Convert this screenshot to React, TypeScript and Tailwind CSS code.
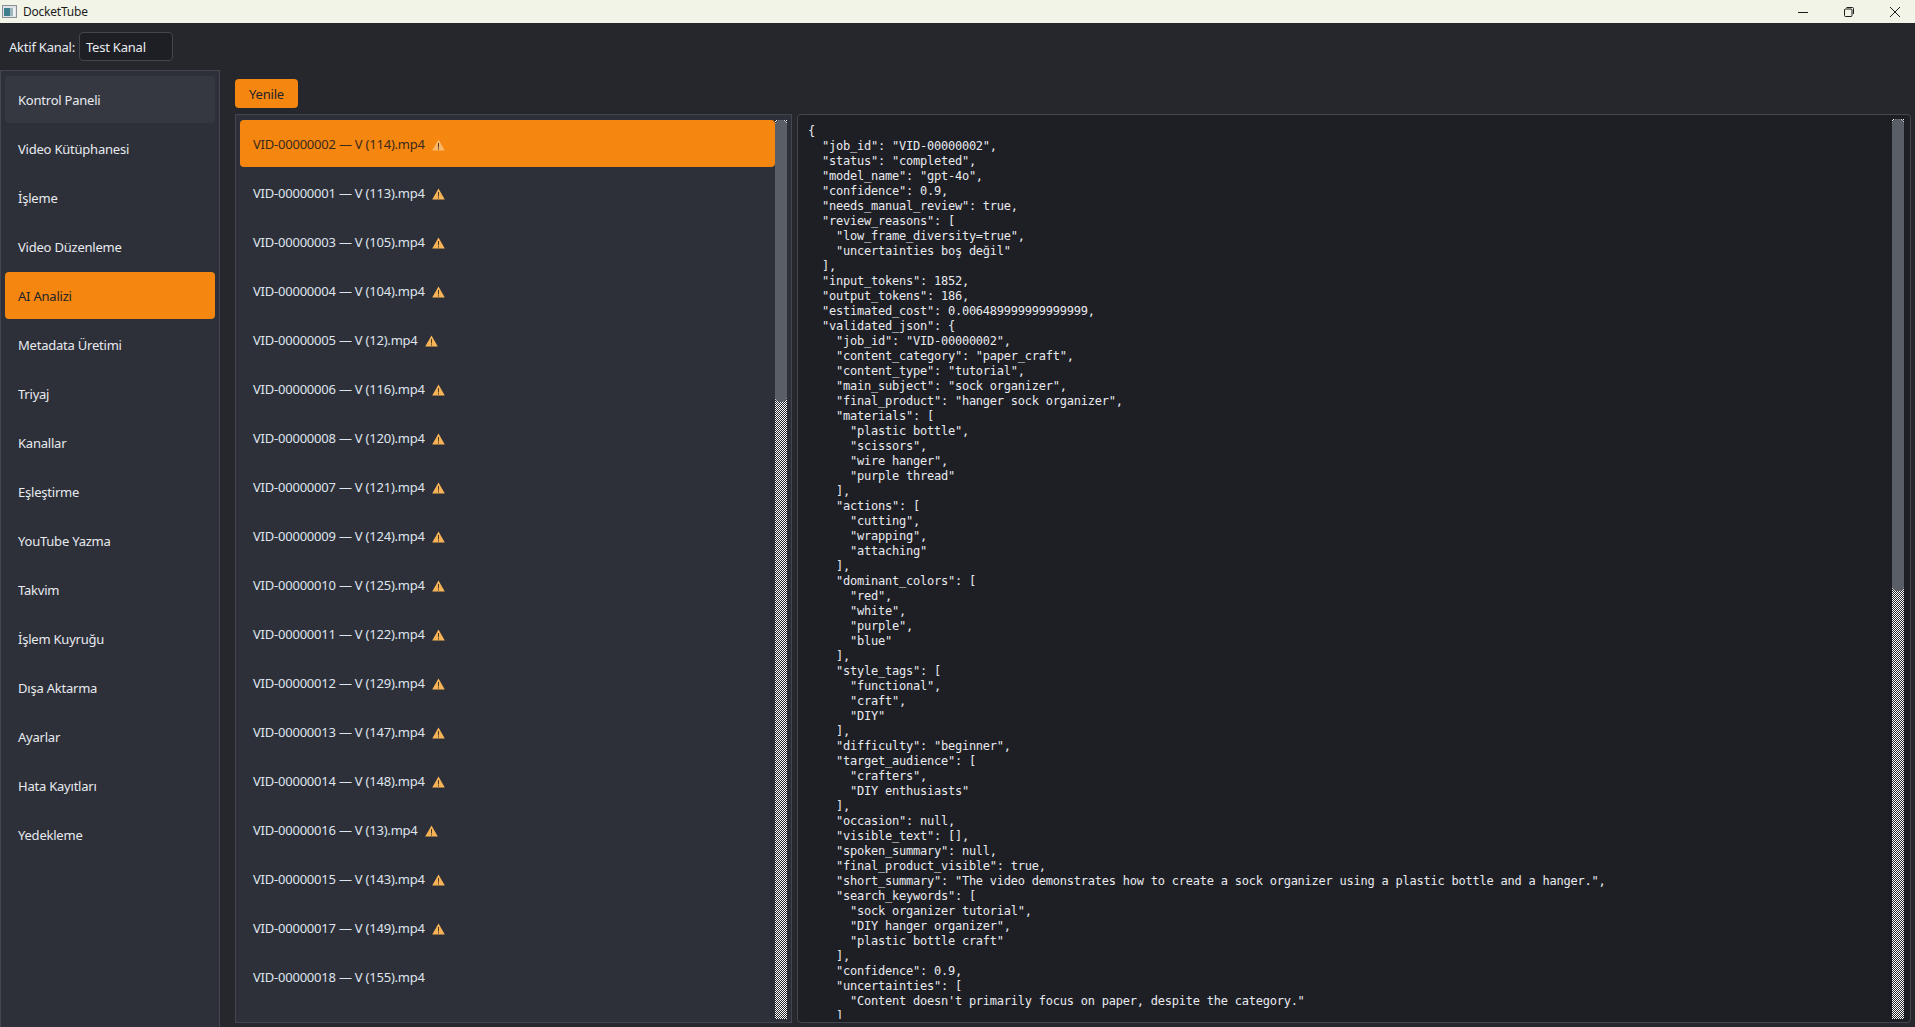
const navItems = [
  "Kontrol Paneli",
  "Video Kütüphanesi",
  "İşleme",
  "Video Düzenleme",
  "AI Analizi",
  "Metadata Üretimi",
  "Triyaj",
  "Kanallar",
  "Eşleştirme",
  "YouTube Yazma",
  "Takvim",
  "İşlem Kuyruğu",
  "Dışa Aktarma",
  "Ayarlar",
  "Hata Kayıtları",
  "Yedekleme",
];

const videos = [
  { label: "VID-00000002 — V (114).mp4", warn: true },
  { label: "VID-00000001 — V (113).mp4", warn: true },
  { label: "VID-00000003 — V (105).mp4", warn: true },
  { label: "VID-00000004 — V (104).mp4", warn: true },
  { label: "VID-00000005 — V (12).mp4", warn: true },
  { label: "VID-00000006 — V (116).mp4", warn: true },
  { label: "VID-00000008 — V (120).mp4", warn: true },
  { label: "VID-00000007 — V (121).mp4", warn: true },
  { label: "VID-00000009 — V (124).mp4", warn: true },
  { label: "VID-00000010 — V (125).mp4", warn: true },
  { label: "VID-00000011 — V (122).mp4", warn: true },
  { label: "VID-00000012 — V (129).mp4", warn: true },
  { label: "VID-00000013 — V (147).mp4", warn: true },
  { label: "VID-00000014 — V (148).mp4", warn: true },
  { label: "VID-00000016 — V (13).mp4", warn: true },
  { label: "VID-00000015 — V (143).mp4", warn: true },
  { label: "VID-00000017 — V (149).mp4", warn: true },
  { label: "VID-00000018 — V (155).mp4", warn: false },
];

const json = `{
  "job_id": "VID-00000002",
  "status": "completed",
  "model_name": "gpt-4o",
  "confidence": 0.9,
  "needs_manual_review": true,
  "review_reasons": [
    "low_frame_diversity=true",
    "uncertainties boş değil"
  ],
  "input_tokens": 1852,
  "output_tokens": 186,
  "estimated_cost": 0.006489999999999999,
  "validated_json": {
    "job_id": "VID-00000002",
    "content_category": "paper_craft",
    "content_type": "tutorial",
    "main_subject": "sock organizer",
    "final_product": "hanger sock organizer",
    "materials": [
      "plastic bottle",
      "scissors",
      "wire hanger",
      "purple thread"
    ],
    "actions": [
      "cutting",
      "wrapping",
      "attaching"
    ],
    "dominant_colors": [
      "red",
      "white",
      "purple",
      "blue"
    ],
    "style_tags": [
      "functional",
      "craft",
      "DIY"
    ],
    "difficulty": "beginner",
    "target_audience": [
      "crafters",
      "DIY enthusiasts"
    ],
    "occasion": null,
    "visible_text": [],
    "spoken_summary": null,
    "final_product_visible": true,
    "short_summary": "The video demonstrates how to create a sock organizer using a plastic bottle and a hanger.",
    "search_keywords": [
      "sock organizer tutorial",
      "DIY hanger organizer",
      "plastic bottle craft"
    ],
    "confidence": 0.9,
    "uncertainties": [
      "Content doesn't primarily focus on paper, despite the category."
    ]`;

const WarnIcon = ({ active }: { active: boolean }) => (
  <svg width="13" height="12" viewBox="0 0 13 12" className="ml-[7px] shrink-0">
    <path d="M6.5 0.5 L12.8 11.5 L0.2 11.5 Z" fill={active ? "#f9b76a" : "#f8b357"} />
    <rect x="6" y="4" width="1" height="4.5" fill="#4a3a22" />
    <rect x="6" y="9.3" width="1" height="1.2" fill="#4a3a22" />
  </svg>
);

const Scrollbar = ({ handle }: { handle: string }) => (
  <div className="w-[12px] shrink-0 bg-[repeating-conic-gradient(#ffffff_0_25%,#23252b_0_50%)] bg-[length:2px_2px]">
    <div className={`${handle} rounded-t-[5px] rounded-b-[5px] bg-[#5a5e67]`} />
  </div>
);

const App = () => {
  return (
    <div className="flex flex-col w-[1915px] h-[1027px] overflow-hidden bg-[#26272d] font-['Noto_Sans',sans-serif] text-[13px] tracking-[-0.22px] text-[#e8eaf0]">
      <div className="flex items-center h-[23px] shrink-0 bg-[#f2f4e8] text-[12px] text-[#1c1c1c]">
        <svg width="15" height="13" viewBox="0 0 15 13" className="ml-[2px]">
          <rect x="0.5" y="0.5" width="14" height="12" fill="#dfe3e6" stroke="#8a9099" />
          <rect x="2" y="3" width="6" height="8" fill="#3d7f8c" />
          <rect x="8" y="3" width="3" height="8" fill="#9fb5be" />
          <rect x="11" y="3" width="2" height="8" fill="#f1f3f4" />
        </svg>
        <span className="ml-[6px]">DocketTube</span>
        <div className="flex items-center ml-auto">
          <svg width="12" height="12" viewBox="0 0 12 12" className="mr-[34px]">
            <path d="M1 6.5 H11" stroke="#1c1c1c" />
          </svg>
          <svg width="12" height="12" viewBox="0 0 12 12" className="mr-[34px]">
            <rect x="1.5" y="3" width="7.5" height="7.5" rx="1" fill="none" stroke="#1c1c1c" />
            <path d="M3.5 1.5 H9.5 a1 1 0 0 1 1 1 V8" fill="none" stroke="#1c1c1c" />
          </svg>
          <svg width="12" height="12" viewBox="0 0 12 12" className="mr-[14px]">
            <path d="M1 1 L11 11 M11 1 L1 11" stroke="#1c1c1c" />
          </svg>
        </div>
      </div>

      <div className="flex items-center h-[47px] shrink-0 pl-[9px]">
        <span className="pt-[2px]">Aktif Kanal:</span>
        <div className="flex items-center w-[94px] h-[29px] ml-[4px] pl-[6px] pt-[2px] rounded-[4px] border border-[#43464e] bg-[#1e1f24]">
          Test Kanal
        </div>
      </div>

      <div className="flex flex-1 min-h-0">
        <div className="flex flex-col gap-[2px] w-[220px] shrink-0 pt-[5px] px-[4px] border border-b-0 border-[#43464e] bg-[#2d3038]">
          {navItems.map((item) => (
            <div
              key={item}
              className={`flex items-center h-[47px] shrink-0 pl-[13px] pt-[2px] rounded-[4px] ${
                item === "AI Analizi"
                  ? "bg-[#f5860f] text-[#23242a]"
                  : item === "Kontrol Paneli"
                    ? "bg-[#353841]"
                    : ""
              }`}
            >
              {item}
            </div>
          ))}
        </div>

        <div className="flex flex-col flex-1 min-w-0 pl-[15px] pr-[4px] pb-[4px]">
          <button className="w-[63px] h-[29px] mt-[9px] pt-[2px] shrink-0 rounded-[4px] bg-[#f5860f] text-[#23242a]">
            Yenile
          </button>

          <div className="flex flex-1 min-h-0 gap-[5px] mt-[6px]">
            <div className="flex w-[557px] shrink-0 overflow-hidden pl-[4px] pt-[5px] pr-[4px] pb-[3px] border border-[#43464e] bg-[#2d3038]">
              <div className="flex flex-col flex-1 min-w-0 gap-[2px] overflow-hidden">
                {videos.map((video, i) => (
                  <div
                    key={video.label}
                    className={`flex items-center h-[47px] shrink-0 pl-[13px] pt-[2px] rounded-[4px] ${
                      i === 0 ? "bg-[#f5860f] text-[#3a2a1c]" : "text-[#dfe4ee]"
                    }`}
                  >
                    {video.label}
                    {video.warn && <WarnIcon active={i === 0} />}
                  </div>
                ))}
              </div>
              <Scrollbar handle="h-[282px]" />
            </div>

            <div className="flex flex-1 min-w-0 overflow-hidden pl-[10px] pt-[4px] pr-[6px] pb-[3px] rounded-[4px] border border-[#43464e] bg-[#1e1f24]">
              <pre className="flex-1 min-w-0 overflow-hidden pt-[5px] font-['DejaVu_Sans_Mono',monospace] text-[12px] leading-[15px] tracking-[-0.23px] text-[#e8eaf0]">
                {json}
              </pre>
              <Scrollbar handle="h-[472px]" />
            </div>
          </div>
        </div>
      </div>
    </div>
  );
};

export default App;
